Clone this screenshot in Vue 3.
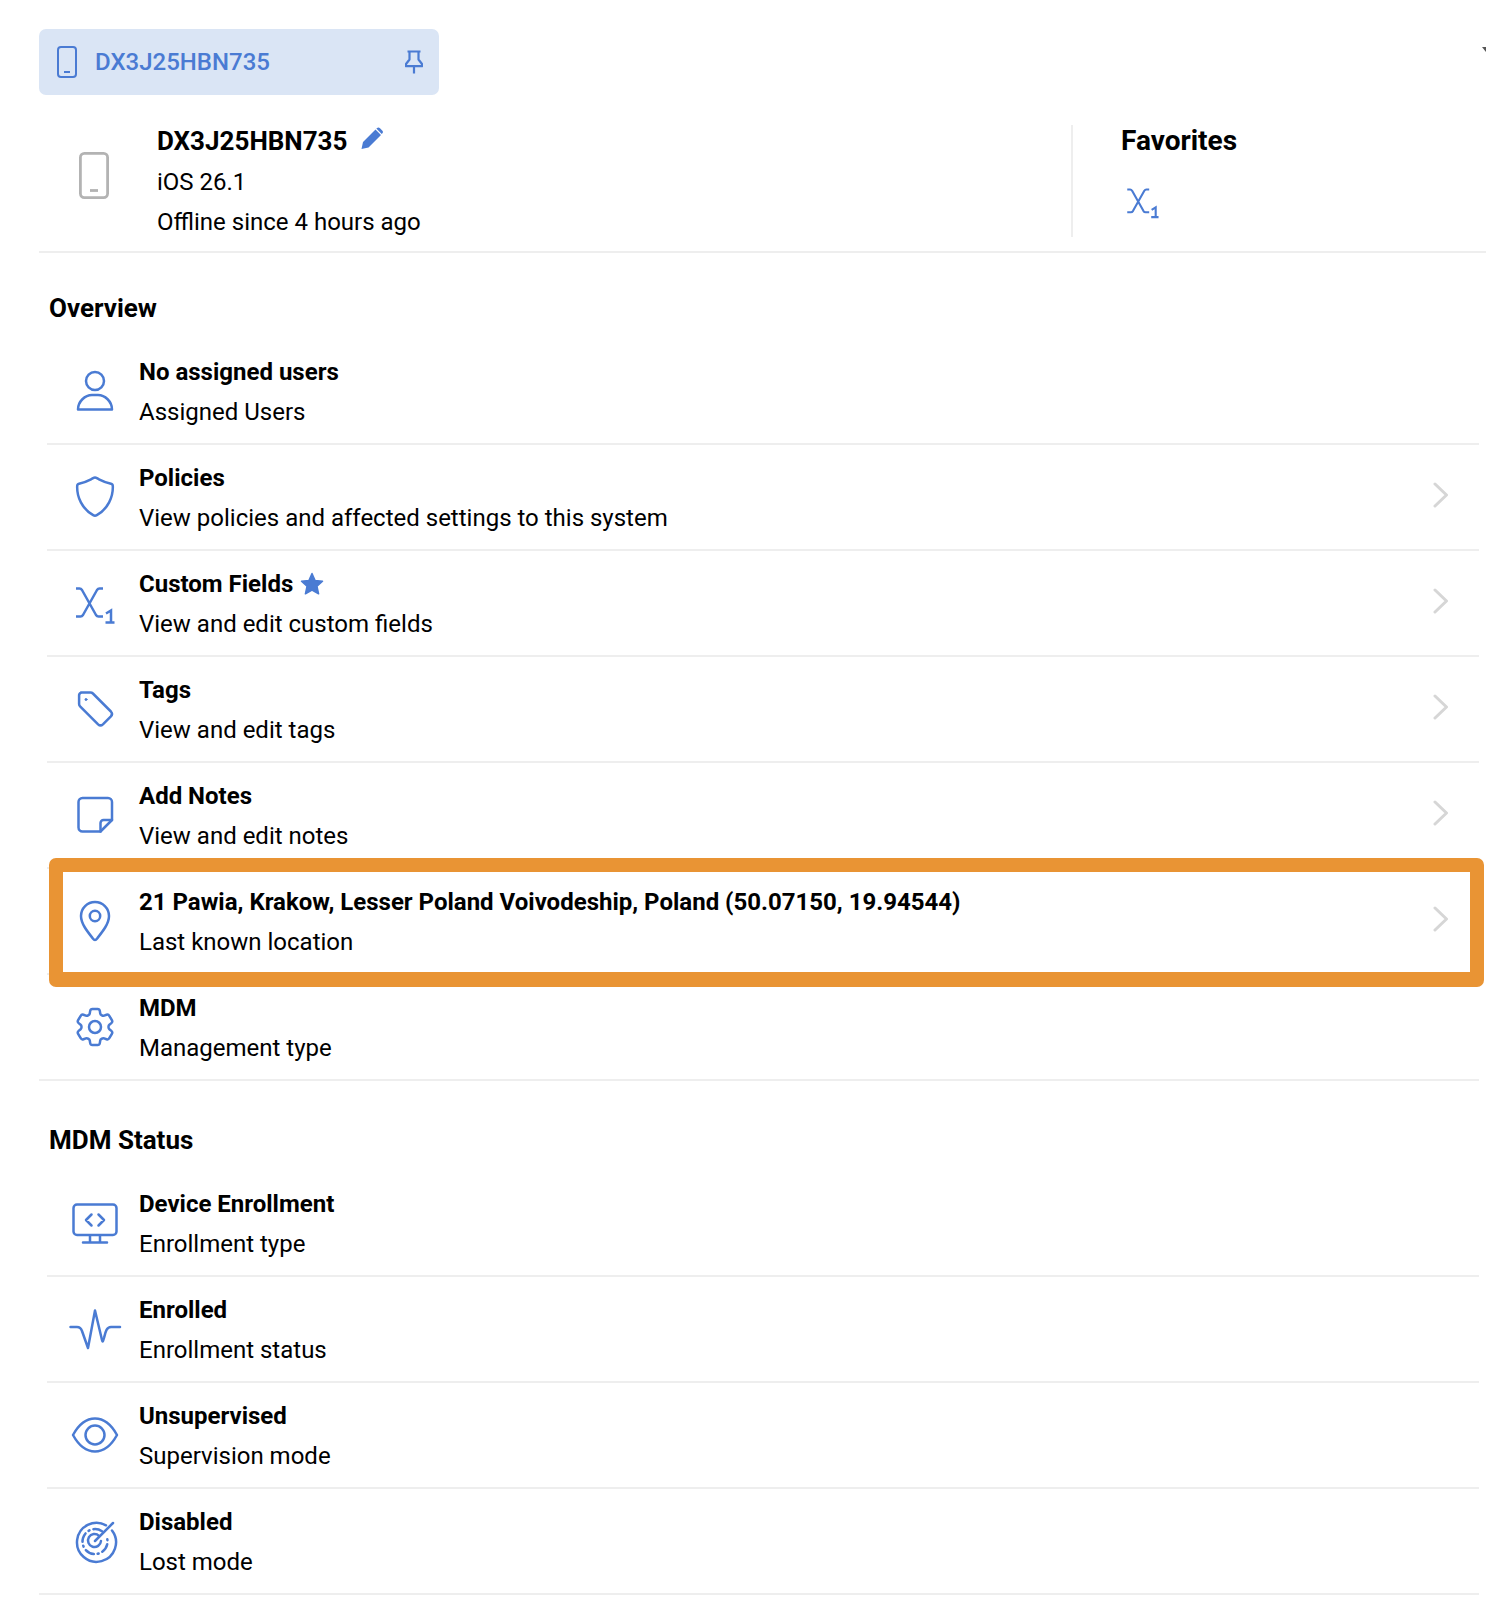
<script setup>
const rowsA = [
  { icon: 'user', title: 'No assigned users', sub: 'Assigned Users' },
  { icon: 'shield', title: 'Policies', sub: 'View policies and affected settings to this system', chev: true },
  { icon: 'x1', title: 'Custom Fields', sub: 'View and edit custom fields', chev: true, star: true },
  { icon: 'tag', title: 'Tags', sub: 'View and edit tags', chev: true },
  { icon: 'note', title: 'Add Notes', sub: 'View and edit notes', chev: true },
  { icon: 'pin', title: '21 Pawia, Krakow, Lesser Poland Voivodeship, Poland (50.07150, 19.94544)', sub: 'Last known location', chev: true, mark: true },
  { icon: 'gear', title: 'MDM', sub: 'Management type', last: true }
]
const rowsB = [
  { icon: 'monitor', title: 'Device Enrollment', sub: 'Enrollment type' },
  { icon: 'pulse', title: 'Enrolled', sub: 'Enrollment status' },
  { icon: 'eye', title: 'Unsupervised', sub: 'Supervision mode' },
  { icon: 'radar', title: 'Disabled', sub: 'Lost mode', last: true }
]
const sections = [
  { name: 'Overview', rows: rowsA },
  { name: 'MDM Status', rows: rowsB }
]
</script>

<template>
  <div class="page">
    <span class="corner"></span>
    <div class="tab">
      <svg class="tab-phone" viewBox="0 0 20 32" width="20" height="32" fill="none" stroke="currentColor" stroke-width="2">
        <rect x="1" y="1" width="18" height="30" rx="3" />
        <path d="M7 26h6" />
      </svg>
      <span class="tab-name">DX3J25HBN735</span>
      <svg class="tab-pin" viewBox="0 0 18 24" width="18" height="24" fill="none" stroke="currentColor" stroke-width="2.200" stroke-linejoin="round">
        <path d="M2.500 1.500h13M4.500 1.500v8L1 14v2.200h16V14l-3.500-4.500v-8M9 16v7.500" />
      </svg>
    </div>

    <header class="head">
      <svg class="head-phone" viewBox="0 0 30 47" width="30" height="47" fill="none" stroke="#b3b3b3" stroke-width="2.800">
        <rect x="1.400" y="1.400" width="27.200" height="44.200" rx="4" />
        <path d="M11 38.500h8" />
      </svg>
      <div class="head-text">
        <div class="head-title">
          DX3J25HBN735
          <svg viewBox="0 0 22 22" width="22" height="22" fill="#4a7bd3">
            <path d="M0.500 22 L2 15 L14.500 2.500 L20 8 L7.500 20.500 Z M15.800 1.200 a2.300 2.300 0 0 1 3.200 0 l2.200 2.200 a2.300 2.300 0 0 1 0 3.200 l-0.500 0.400 L15.300 1.600 Z" />
          </svg>
        </div>
        <div class="line">iOS 26.1</div>
        <div class="line">Offline since 4 hours ago</div>
      </div>
      <div class="fav">
        <div class="fav-title">Favorites</div>
        <svg class="fav-icon" viewBox="0 0 48 48" width="39" height="39" fill="none" stroke="#4a7bd3" stroke-width="2.600">
          <path d="M4 10.500h3.500q1.500 0 2.500 1.500L24 37q1 1.500 2.500 1.500H31M31 10.500h-3.500q-1.500 0-2.500 1.500L11 37q-1 1.500-2.500 1.500H4" />
          <path d="M34 35.500l5-3V44.500M33.500 44.500h9" />
        </svg>
      </div>
    </header>

    <section v-for="s in sections" :key="s.name" class="section">
      <h2 class="section-title">{{ s.name }}</h2>
      <div v-for="r in s.rows" :key="r.title" class="row" :class="{ last: r.last }">
        <div class="icon">
          <svg viewBox="0 0 48 48" width="48" height="48" fill="none" stroke="#4a7bd3" stroke-width="2.500" stroke-linejoin="round" stroke-linecap="round">
            <template v-if="r.icon === 'user'">
              <circle cx="24" cy="15" r="9" />
              <path d="M7 43.500c0-8 7-14.500 14-14.500h6c7 0 14 6.500 14 14.500z" />
            </template>
            <path v-else-if="r.icon === 'shield'" d="M24 5.500c1 0 2 .800 4 1.800 3.500 1.800 8 3.500 12 4.500 1.200.300 1.800 1 1.800 2.200 .500 11-5 23-16 29.200-1.200.700-2.400.700-3.600 0-11-6.200-16.500-18.200-16-29.200 0-1.200.600-1.900 1.800-2.200 4-1 8.500-2.700 12-4.500 2-1 3-1.800 4-1.800z" />
            <g v-else-if="r.icon === 'x1'" transform="translate(1 0)">
              <path d="M4 10.500h3.500q1.500 0 2.500 1.500L24 37q1 1.500 2.500 1.500H31M31 10.500h-3.500q-1.500 0-2.500 1.500L11 37q-1 1.500-2.500 1.500H4" stroke-linecap="butt" />
              <path d="M34 35.500l5-3V44.500M33.500 44.500h9" stroke-linecap="butt" stroke-linejoin="miter" />
            </g>
            <template v-else-if="r.icon === 'tag'">
              <path d="M10 8.500h9.500a3.500 3.500 0 0 1 2.400 1l18 18a3.500 3.500 0 0 1 0 4.800l-8 8a3.500 3.500 0 0 1-4.800 0l-18-18a3.500 3.500 0 0 1-1-2.400V11a3 3 0 0 1 2.500-2.500z" />
              <circle cx="15" cy="15.500" r="1" fill="#4a7bd3" stroke-width="1" />
            </template>
            <template v-else-if="r.icon === 'note'">
              <path d="M11.500 8h25.500a4 4 0 0 1 4 4v18L29.500 41.500H11.500a4 4 0 0 1-4-4V12a4 4 0 0 1 4-4z" />
              <path d="M41 30h-8.500a3 3 0 0 0-3 3v8.500" />
            </template>
            <template v-else-if="r.icon === 'pin'">
              <path d="M24 44c-1 0-1.500-.700-2.500-2C16 35 10 27.500 10 20a14 14 0 0 1 28 0c0 7.500-6 15-11.500 22-1 1.300-1.500 2-2.500 2z" />
              <circle cx="24" cy="20" r="5.200" />
            </template>
            <template v-else-if="r.icon === 'gear'">
              <path transform="translate(0 1) scale(2)" stroke-width="1.250" d="M9.594 3.940c.09-.542.56-.94 1.110-.94h2.593c.55 0 1.020.398 1.110.94l.213 1.281c.063.374.313.686.645.870.074.040.147.083.22.127.325.196.72.257 1.075.124l1.217-.456a1.125 1.125 0 0 1 1.370.49l1.296 2.247a1.125 1.125 0 0 1-.26 1.431l-1.003.827c-.293.241-.438.613-.43.992a7.723 7.723 0 0 1 0 .255c-.008.378.137.75.43.991l1.004.827c.424.35.534.955.26 1.430l-1.298 2.247a1.125 1.125 0 0 1-1.369.491l-1.217-.456c-.355-.133-.75-.072-1.076.124a6.470 6.470 0 0 1-.22.128c-.331.183-.581.495-.644.869l-.213 1.281c-.09.543-.56.94-1.110.94h-2.594c-.55 0-1.019-.398-1.110-.94l-.213-1.281c-.062-.374-.312-.686-.644-.87a6.520 6.520 0 0 1-.22-.127c-.325-.196-.72-.257-1.076-.124l-1.217.456a1.125 1.125 0 0 1-1.369-.49l-1.297-2.247a1.125 1.125 0 0 1 .26-1.431l1.004-.827c.292-.24.437-.613.43-.991a6.932 6.932 0 0 1 0-.255c.007-.38-.138-.751-.43-.992l-1.004-.827a1.125 1.125 0 0 1-.26-1.430l1.297-2.247a1.125 1.125 0 0 1 1.370-.491l1.216.456c.356.133.751.072 1.076-.124.072-.044.146-.086.22-.128.332-.183.582-.495.644-.869l.214-1.280z" />
              <circle cx="24" cy="25" r="6" />
            </template>
            <template v-else-if="r.icon === 'monitor'">
              <rect x="2.500" y="5.500" width="43" height="30.500" rx="3.500" />
              <path d="M19 37v6.500M29 37v6.500M12 43.500h24M20.500 15.500 15 21l5.500 5.500M27.500 15.500 33 21l-5.500 5.500" />
            </template>
            <path v-else-if="r.icon === 'pulse'" d="M-0.500 22H6c3 0 4 1 5 4l6 17L24 5.500 31 35c.700 2.500 1 1.500 2-2 1.500-6 2.500-11 7-11h9" />
            <template v-else-if="r.icon === 'eye'">
              <path d="M2 24C8 13 15.500 7.500 24 7.500S40 13 46 24C40 35 32.500 40.500 24 40.500S8 35 2 24z" />
              <circle cx="24" cy="24" r="9.500" />
            </template>
            <template v-else-if="r.icon === 'radar'">
              <path d="M35 8.300A19.500 19.500 0 1 0 41 13.500" />
              <path d="M31 14.200A12.500 12.500 0 1 0 36 21" stroke-dasharray="9 4 1 4" />
              <path d="M28 18.800A6.500 6.500 0 1 0 30 24" />
              <path d="M24 24 42 6" />
            </template>
          </svg>
        </div>
        <div class="text">
          <div class="title">
            {{ r.title }}
            <svg v-if="r.star" class="star" viewBox="0 0 24 24" width="24" height="24" fill="#4a7bd3" stroke="#4a7bd3" stroke-width="1.500" stroke-linejoin="round">
              <path d="M12 1.500l3.100 7 7.400.8-5.500 5 1.600 7.500L12 18l-6.600 3.800L7 14.300l-5.500-5 7.400-.8z" />
            </svg>
          </div>
          <div class="line">{{ r.sub }}</div>
        </div>
        <svg v-if="r.chev" class="chev" viewBox="0 0 16 26" width="16" height="26" fill="none" stroke="#d6d6d6" stroke-width="3" stroke-linecap="round" stroke-linejoin="round">
          <path d="M2 2l11.500 11L2 24" />
        </svg>
        <div v-if="r.mark" class="mark"></div>
      </div>
    </section>
  </div>
</template>

<style scoped>
.page {
  position: relative;
  box-sizing: border-box;
  height: 1617px;
  overflow: hidden;
  padding: 29px 0 0 39px;
  background: #fff;
  font-family: Roboto, "Liberation Sans", sans-serif;
  color: #000;
}
.corner {
  position: absolute;
  top: 47px;
  right: 0;
  width: 0;
  height: 0;
  border-top: 5px solid #555;
  border-left: 4px solid transparent;
}
.tab {
  display: flex;
  align-items: center;
  width: 400px;
  height: 66px;
  box-sizing: border-box;
  padding: 0 16px 0 18px;
  border-radius: 7px;
  background: #dae5f5;
  color: #4a7bd3;
}
.tab-phone { flex: none; }
.tab-name {
  margin-left: 18px;
  font-size: 24px;
  font-weight: 500;
}
.tab-pin { flex: none; margin-left: auto; }
.head {
  display: flex;
  height: 158px;
  box-sizing: border-box;
  padding-top: 25px;
  border-bottom: 2px solid #eeeeee;
}
.head-phone { flex: none; margin: 32px 0 0 40px; }
.head-text { margin-left: 48px; width: 914px; flex: none; }
.head-title {
  display: flex;
  align-items: center;
  gap: 14px;
  height: 40px;
  margin-bottom: 2px;
  padding-top: 1px;
  box-sizing: border-box;
  font-size: 26px;
  font-weight: 700;
}
.head-title svg { margin-top: -6px; }
.line {
  height: 40px;
  line-height: 40px;
  font-size: 24px;
}
.fav {
  align-self: flex-start;
  height: 112px;
  margin-top: 5px;
  padding-left: 48px;
  border-left: 2px solid #eeeeee;
}
.fav-title {
  margin-top: -4px;
  height: 40px;
  line-height: 40px;
  font-size: 28px;
  font-weight: 700;
}
.fav-icon { display: block; margin: 20px 0 0 3px; }
.section-title {
  margin: 0;
  height: 86px;
  padding: 35px 0 0 10px;
  box-sizing: border-box;
  line-height: 40px;
  font-size: 26px;
  font-weight: 700;
}
.section + .section .section-title {
  height: 90px;
  padding-top: 39px;
}
.row {
  position: relative;
  display: flex;
  align-items: center;
  height: 106px;
  box-sizing: border-box;
  margin: 0 7px 0 8px;
  border-bottom: 2px solid #eeeeee;
}
.row.last { margin-left: 0; }
.row.last .icon { margin-left: 32px; }
.icon { flex: none; width: 48px; height: 48px; margin-left: 24px; }
.section:first-of-type .icon { margin-top: -2px; }
.icon svg { display: block; overflow: visible; }
.text { margin-left: 20px; padding-top: 2px; }
.title {
  display: flex;
  align-items: center;
  gap: 7px;
  height: 40px;
  line-height: 40px;
  font-size: 24px;
  font-weight: 700;
}
.star { margin-top: -1px; }
.chev { margin-left: auto; margin-right: 30px; margin-bottom: 4px; }
.mark {
  position: absolute;
  top: -11px;
  left: 2px;
  right: -5px;
  bottom: -14px;
  border: 14px solid #e99434;
  border-bottom-width: 15px;
  border-radius: 7px;
  pointer-events: none;
}
</style>

<style>
html, body { margin: 0; background: #fff; }
</style>
